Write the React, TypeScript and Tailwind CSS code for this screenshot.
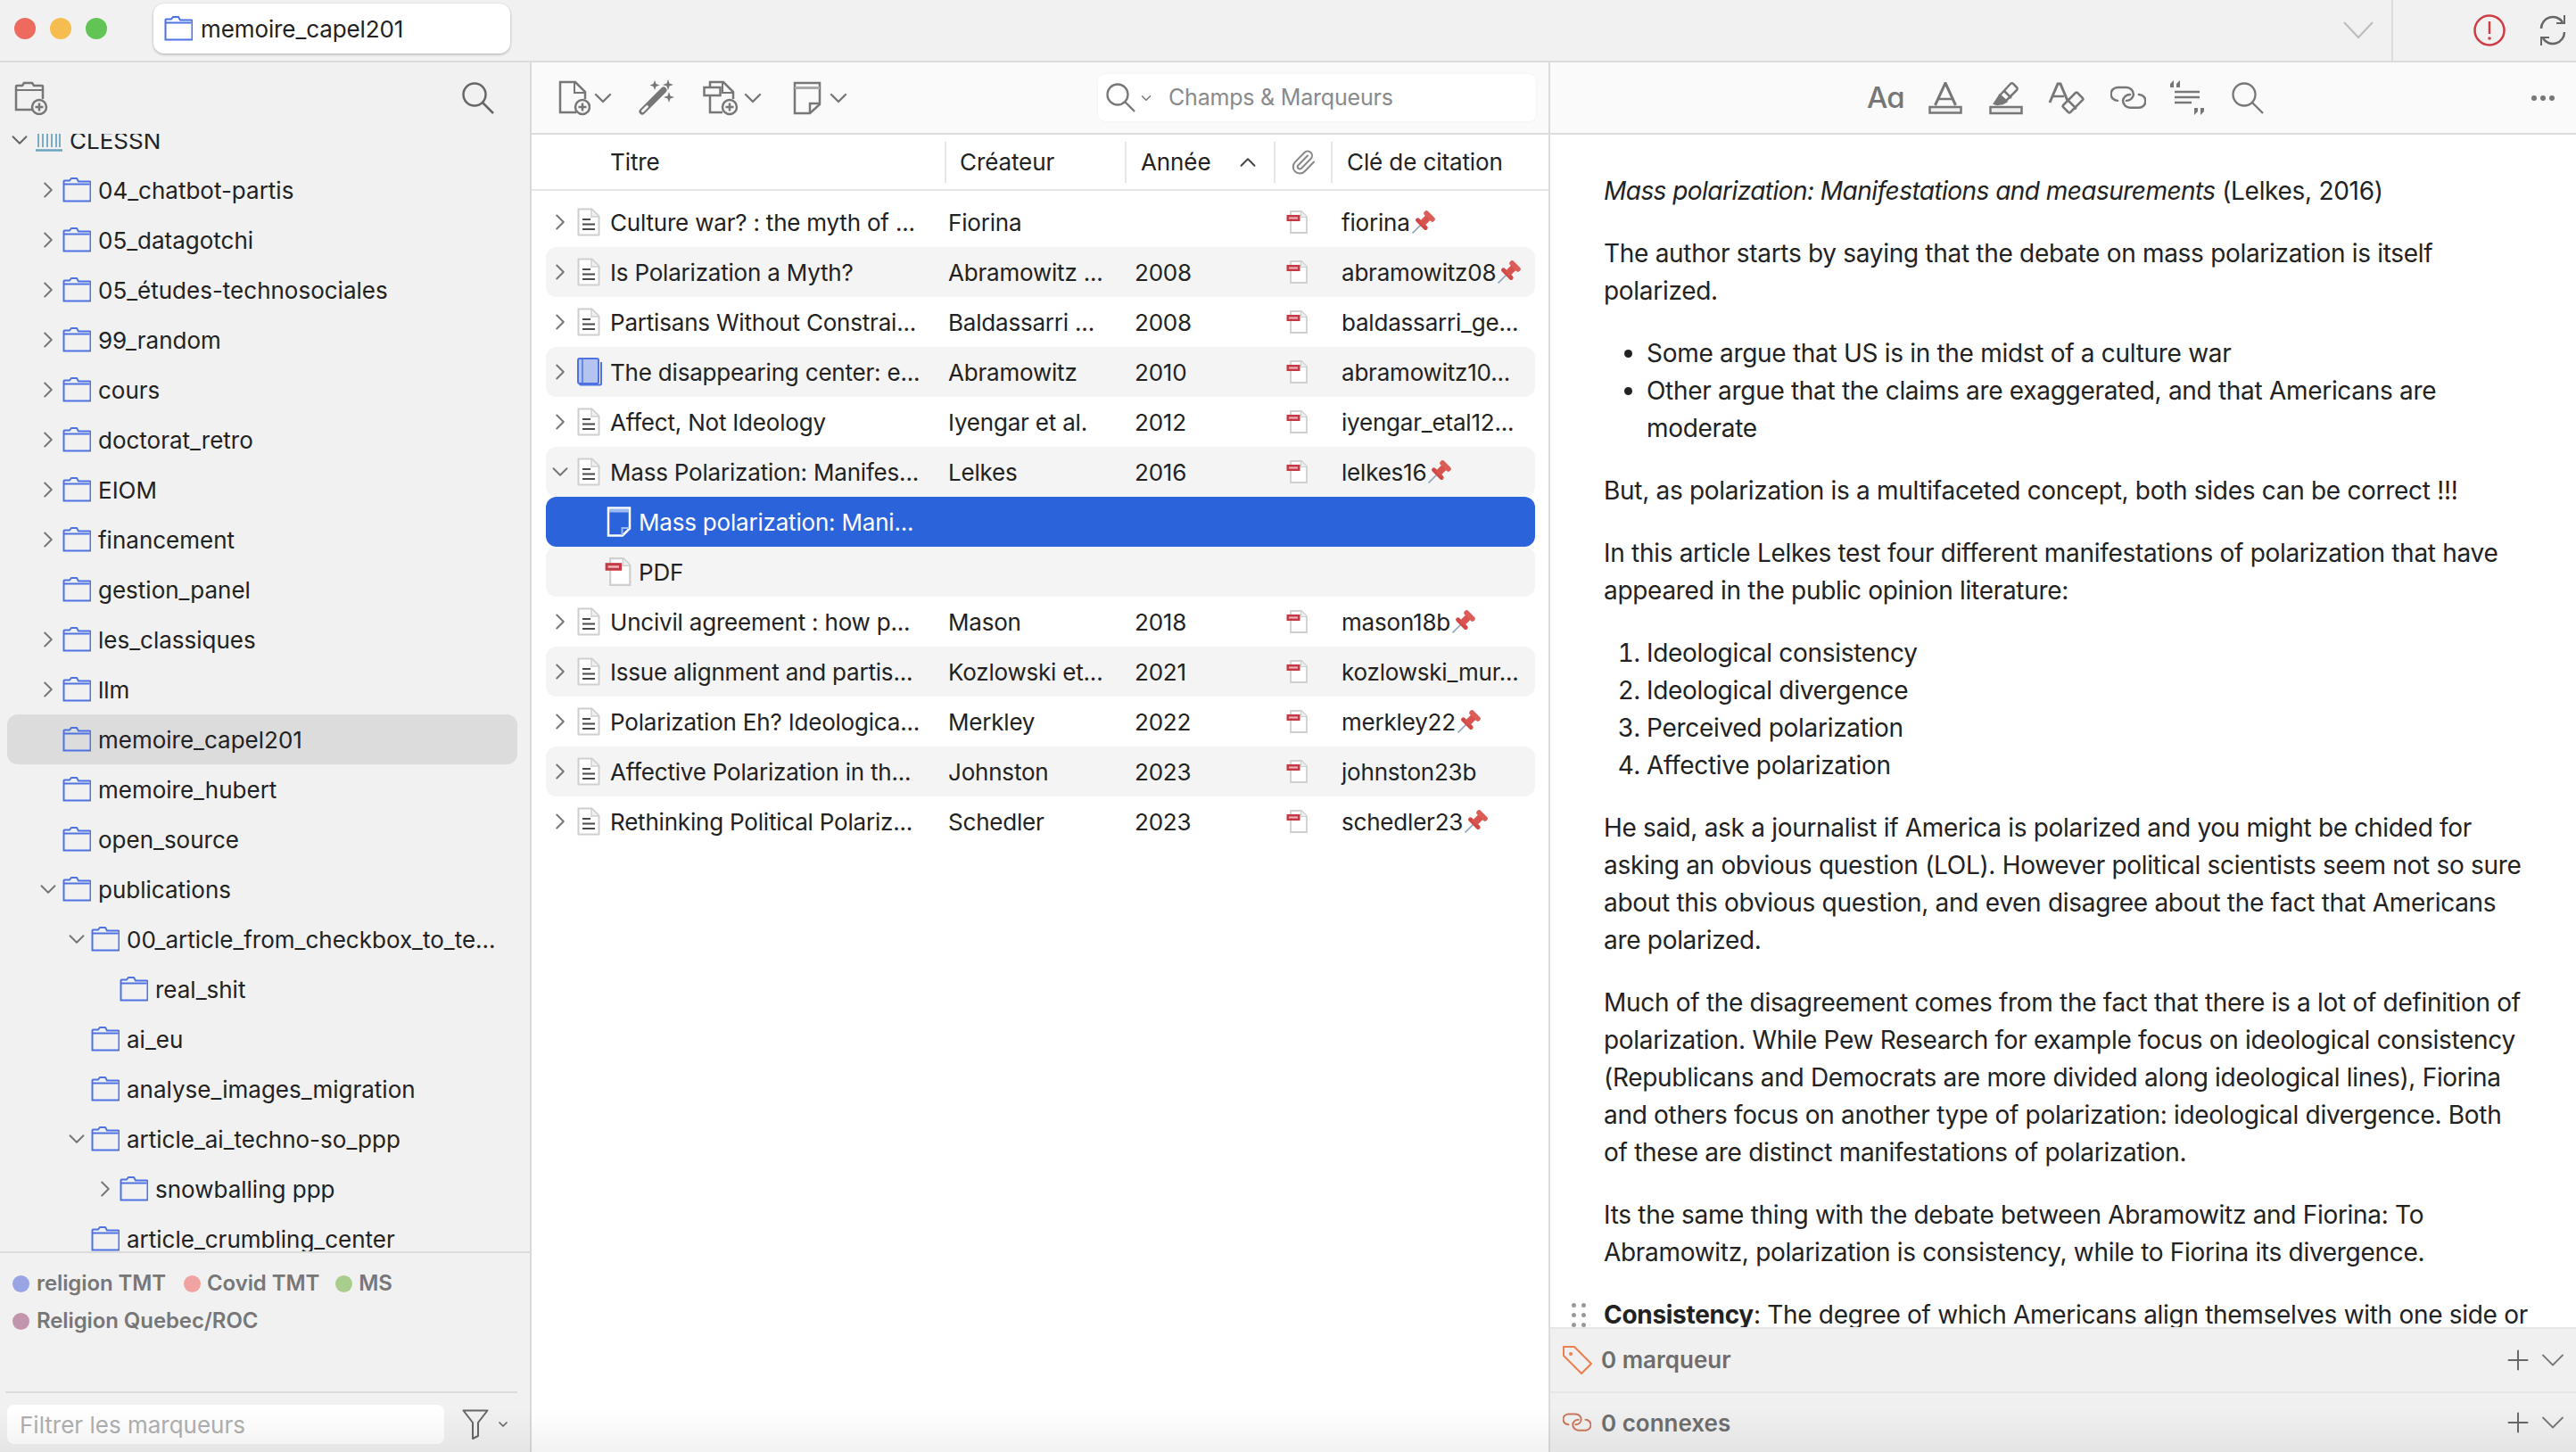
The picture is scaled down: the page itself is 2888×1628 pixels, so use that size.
import React from "react";
import { ChevronRight, ChevronDown, ChevronUp, Plus, Paperclip } from "lucide-react";

const FONT = "font-['Inter','Noto_Sans',sans-serif]";

type TreeItem = { name: string; level: number; arrow?: "right" | "down"; active?: boolean };

const tree: TreeItem[] = [
  { name: "04_chatbot-partis", level: 1, arrow: "right" },
  { name: "05_datagotchi", level: 1, arrow: "right" },
  { name: "05_études-technosociales", level: 1, arrow: "right" },
  { name: "99_random", level: 1, arrow: "right" },
  { name: "cours", level: 1, arrow: "right" },
  { name: "doctorat_retro", level: 1, arrow: "right" },
  { name: "EIOM", level: 1, arrow: "right" },
  { name: "financement", level: 1, arrow: "right" },
  { name: "gestion_panel", level: 1 },
  { name: "les_classiques", level: 1, arrow: "right" },
  { name: "llm", level: 1, arrow: "right" },
  { name: "memoire_capel201", level: 1, active: true },
  { name: "memoire_hubert", level: 1 },
  { name: "open_source", level: 1 },
  { name: "publications", level: 1, arrow: "down" },
  { name: "00_article_from_checkbox_to_te...", level: 2, arrow: "down" },
  { name: "real_shit", level: 3 },
  { name: "ai_eu", level: 2 },
  { name: "analyse_images_migration", level: 2 },
  { name: "article_ai_techno-so_ppp", level: 2, arrow: "down" },
  { name: "snowballing ppp", level: 3, arrow: "right" },
  { name: "article_crumbling_center", level: 2 },
];

type Row = {
  title: string;
  author?: string;
  year?: string;
  key?: string;
  pin?: boolean;
  kind?: "doc" | "book" | "note" | "pdf";
  open?: boolean;
  child?: boolean;
  shaded?: boolean;
  selected?: boolean;
};

const rows: Row[] = [
  { title: "Culture war? : the myth of ...", author: "Fiorina", key: "fiorina", pin: true },
  { title: "Is Polarization a Myth?", author: "Abramowitz ...", year: "2008", key: "abramowitz08", pin: true, shaded: true },
  { title: "Partisans Without Constrai...", author: "Baldassarri ...", year: "2008", key: "baldassarri_ge..." },
  { title: "The disappearing center: e...", author: "Abramowitz", year: "2010", key: "abramowitz10...", kind: "book", shaded: true },
  { title: "Affect, Not Ideology", author: "Iyengar et al.", year: "2012", key: "iyengar_etal12..." },
  { title: "Mass Polarization: Manifes...", author: "Lelkes", year: "2016", key: "lelkes16", pin: true, open: true, shaded: true },
  { title: "Mass polarization: Mani...", kind: "note", child: true, selected: true },
  { title: "PDF", kind: "pdf", child: true, shaded: true },
  { title: "Uncivil agreement : how p...", author: "Mason", year: "2018", key: "mason18b", pin: true },
  { title: "Issue alignment and partis...", author: "Kozlowski et...", year: "2021", key: "kozlowski_mur...", shaded: true },
  { title: "Polarization Eh? Ideologica...", author: "Merkley", year: "2022", key: "merkley22", pin: true },
  { title: "Affective Polarization in th...", author: "Johnston", year: "2023", key: "johnston23b", shaded: true },
  { title: "Rethinking Political Polariz...", author: "Schedler", year: "2023", key: "schedler23", pin: true },
];

const FolderIcon = () => (
  <svg width="32" height="28" viewBox="0 0 32 28" fill="none" stroke="#4f72e3" strokeWidth="2" className="shrink-0">
    <path d="M1.500 26.500V4.500a1 1 0 0 1 1-1h5.500l2-2.500h6l2 3.500h12.500a1 1 0 0 1 1 1v21z" />
    <path d="M1.500 7.500h29" />
  </svg>
);

const DocIcon = () => (
  <svg width="26" height="32" viewBox="0 0 26 32" className="shrink-0">
    <path d="M1.500 1.500h15l8 8v21h-23z" fill="#fff" stroke="#cfcfcf" strokeWidth="2" />
    <path d="M16 2v8h8" fill="#efefef" stroke="#cfcfcf" strokeWidth="1.500" />
    <path d="M6 13h9M6 18.500h14M6 24h14" stroke="#4a4a4a" strokeWidth="2" />
  </svg>
);

const BookIcon = () => (
  <svg width="28" height="32" viewBox="0 0 28 32" className="shrink-0">
    <path d="M3 4v25.500a1 1 0 0 0 1 1h22a1 1 0 0 0 1-1V5" fill="none" stroke="#4f72e3" strokeWidth="2" />
    <rect x="1" y="1" width="23" height="28" rx="2" fill="#b4c4ee" stroke="#4f72e3" strokeWidth="2" />
    <path d="M6 2v26" stroke="#4f72e3" strokeWidth="1.500" />
  </svg>
);

const PdfIcon = ({ big }: { big?: boolean }) => (
  <svg width={big ? 32 : 26} height={big ? 32 : 26} viewBox="0 0 26 26" className="shrink-0">
    <path d="M5 1h12l6 6v18H5z" fill="#fff" stroke="#cfcfcf" strokeWidth="1.800" />
    <path d="M16.500 1v6.500H23" fill="#efefef" stroke="#cfcfcf" strokeWidth="1.200" />
    <rect x="0.500" y="5" width="15" height="7" fill="#c53a45" />
    <rect x="3" y="7.500" width="10" height="2" fill="#efb9bd" />
  </svg>
);

const NoteWhiteIcon = () => (
  <svg width="28" height="34" viewBox="0 0 28 34" className="shrink-0">
    <path d="M2 1.500h24v23l-8 8H2z" fill="#2b63da" stroke="#fff" strokeWidth="2.500" />
    <rect x="3" y="3" width="22" height="3.500" fill="#9cb9f0" />
    <path d="M17.500 32v-8h8" fill="none" stroke="#9cb9f0" strokeWidth="2" />
  </svg>
);

const Pin = () => (
  <svg width="26" height="26" viewBox="0 0 24 24" className="ml-[2px] shrink-0">
    <path d="M0.500 23.500l9-9" stroke="#8fa3b8" strokeWidth="1.500" />
    <path d="M6 10l8 8" stroke="#cf4a46" strokeWidth="4.500" strokeLinecap="round" />
    <path d="M10 14l7-7" stroke="#d9534f" strokeWidth="7" />
    <path d="M15 3l6 6" stroke="#dc5c57" strokeWidth="5.500" strokeLinecap="round" />
  </svg>
);

const ToolDocPlus = () => (
  <svg width="36" height="40" viewBox="0 0 36 40" fill="none" stroke="#777" strokeWidth="2.500">
    <path d="M20 36H2V2h17l11 11v8" />
    <path d="M18 2v12h12" strokeWidth="2" />
    <circle cx="27" cy="30" r="8" fill="#fafafa" />
    <path d="M27 25.500v9M22.500 30h9" />
  </svg>
);

const ToolWand = () => (
  <svg width="42" height="42" viewBox="0 0 42 42" fill="none">
    <path d="M4 36L28 12" stroke="#777" strokeWidth="7" strokeLinecap="round" />
    <path d="M4.500 35.500l5-5" stroke="#fafafa" strokeWidth="3" strokeLinecap="round" />
    <path d="M18 1l1.500 4 4 1.500-4 1.500L18 12l-1.500-4-4-1.500 4-1.500zM33 0l1.500 4.500 4.500 1.500-4.500 1.500L33 12l-1.500-4.500L27 6l4.500-1.500zM34 14l1.500 4.500 4.500 1.500-4.500 1.500L34 26l-1.500-4.500L28 20l4.500-1.500z" fill="#777" />
  </svg>
);

const ToolAttach = () => (
  <svg width="42" height="40" viewBox="0 0 42 40" fill="none" stroke="#777" strokeWidth="2.500">
    <path d="M8 9V2h15l11 11v8M22 36H8V17" />
    <path d="M22 2v12h12" strokeWidth="2" />
    <rect x="1.500" y="8" width="18" height="9" fill="#fafafa" />
    <circle cx="30" cy="30" r="8" fill="#fafafa" />
    <path d="M30 25.500v9M25.500 30h9" />
  </svg>
);

const ToolNote = () => (
  <svg width="32" height="38" viewBox="0 0 32 38" fill="none" stroke="#777" strokeWidth="2.500">
    <path d="M2 2h28v24L19 36H2z" />
    <path d="M2 7.500h28" stroke="#aaa" strokeWidth="3" />
    <path d="M19 36V25h11" />
  </svg>
);

const ToolUnderlineA = () => (
  <svg width="38" height="36" viewBox="0 0 38 36">
    <path d="M7.500 26L19 1l11.500 25" fill="none" stroke="#777" strokeWidth="3" />
    <path d="M11 19h16" stroke="#777" strokeWidth="2.500" />
    <rect x="1.500" y="28" width="35" height="6.500" fill="#eee" stroke="#777" strokeWidth="2.500" />
  </svg>
);

const ToolHighlight = () => (
  <svg width="38" height="38" viewBox="0 0 38 38" fill="none" stroke="#777" strokeWidth="2.500">
    <path d="M12 16L24 3a2 2 0 0 1 3 0l4 4a2 2 0 0 1 0 3L19 22z" />
    <path d="M17 11l8 8" />
    <path d="M12 16l7 7-4 2-6 1-3-1z" fill="#777" />
    <rect x="1.500" y="29" width="35" height="7" fill="#eee" />
  </svg>
);

const ToolClear = () => (
  <svg width="42" height="36" viewBox="0 0 42 36" fill="none" stroke="#777">
    <path d="M2 23L11 2h3l8 19" strokeWidth="3" />
    <path d="M6 16h12" strokeWidth="2.500" />
    <path d="M17 26L31 12a1.500 1.500 0 0 1 2 0l6 6a1.500 1.500 0 0 1 0 2L25 34a1.500 1.500 0 0 1-2 0l-6-6a1.500 1.500 0 0 1 0-2zM23 21l9 9" strokeWidth="2.500" fill="#fafafa" />
  </svg>
);

const LinkIcon = ({ color = "#777", w = 40, sw = 2.5 }: { color?: string; w?: number; sw?: number }) => (
  <svg width={w} height={w * 0.72} viewBox="0 0 40 29" fill="none" stroke={color} strokeWidth={sw} strokeLinecap="round">
    <path d="M8 18a7.500 7.500 0 0 1 0-15h10a8 8 0 0 1 8 8 8 8 0 0 1-8 7" />
    <path d="M32 11a7.500 7.500 0 0 1 0 15H22a8 8 0 0 1-8-8 8 8 0 0 1 8-7" />
  </svg>
);

const ToolQuote = () => (
  <svg width="40" height="40" viewBox="0 0 40 40" fill="none">
    <path d="M5 0L1 4v4h4V3zM12 0L8 4v4h4V3z" fill="#777" />
    <path d="M6 13h28M6 19h28M6 25h19" stroke="#777" strokeWidth="2.500" />
    <path d="M28 31h4v4l-4 4v-3zM35 31h4v4l-4 4v-3z" fill="#777" />
  </svg>
);

const FilterIcon = () => (
  <svg width="30" height="34" viewBox="0 0 30 34" fill="none" stroke="#666" strokeWidth="2">
    <path d="M1.500 1.500h27L18 15v15l-6 3V15z" strokeLinejoin="round" />
  </svg>
);

const TagIcon = () => (
  <svg width="34" height="32" viewBox="0 0 34 32" fill="none" stroke="#ee7f4f" strokeWidth="2">
    <path d="M1 1h12l19 19-11 11L1 11z" strokeLinejoin="round" />
    <circle cx="9" cy="9" r="2" fill="#ee7f4f" stroke="none" />
  </svg>
);

const Lines = ({ lines }: { lines: React.ReactNode[] }) => (
  <>
    {lines.map((l, i) => (
      <div key={i} className="whitespace-nowrap">{l}</div>
    ))}
  </>
);

const NoteBody = () => (
  <div className="flex flex-col gap-7 pl-[60px] pt-[123px] text-[28px] leading-[42px] text-[#222] tracking-[-0.3px]">
    <div className="whitespace-nowrap">
      <em className="tracking-[-0.54px]">Mass polarization: Manifestations and measurements</em> (Lelkes, 2016)
    </div>
    <div>
      <Lines lines={["The author starts by saying that the debate on mass polarization is itself", "polarized."]} />
    </div>
    <ul className="list-disc pl-12">
      <li>Some argue that US is in the midst of a culture war</li>
      <li>
        <Lines lines={["Other argue that the claims are exaggerated, and that Americans are", "moderate"]} />
      </li>
    </ul>
    <div>But, as polarization is a multifaceted concept, both sides can be correct !!!</div>
    <div>
      <Lines lines={["In this article Lelkes test four different manifestations of polarization that have", "appeared in the public opinion literature:"]} />
    </div>
    <ol className="list-decimal pl-12">
      <li>Ideological consistency</li>
      <li>Ideological divergence</li>
      <li>Perceived polarization</li>
      <li>Affective polarization</li>
    </ol>
    <div>
      <Lines
        lines={[
          "He said, ask a journalist if America is polarized and you might be chided for",
          "asking an obvious question (LOL). However political scientists seem not so sure",
          "about this obvious question, and even disagree about the fact that Americans",
          "are polarized.",
        ]}
      />
    </div>
    <div>
      <Lines
        lines={[
          "Much of the disagreement comes from the fact that there is a lot of definition of",
          "polarization. While Pew Research for example focus on ideological consistency",
          "(Republicans and Democrats are more divided along ideological lines), Fiorina",
          "and others focus on another type of polarization: ideological divergence. Both",
          "of these are distinct manifestations of polarization.",
        ]}
      />
    </div>
    <div>
      <Lines
        lines={[
          "Its the same thing with the debate between Abramowitz and Fiorina: To",
          "Abramowitz, polarization is consistency, while to Fiorina its divergence.",
        ]}
      />
    </div>
    <div className="relative whitespace-nowrap">
      <div className="absolute left-[-36px] top-[8px] grid grid-cols-2 gap-x-[6px] gap-y-[6px]">
        {[0, 1, 2, 3, 4, 5, 6, 7].map((d) => (
          <span key={d} className="w-[5px] h-[5px] rounded-full bg-[#999]" />
        ))}
      </div>
      <strong>Consistency</strong>: The degree of which Americans align themselves with one side or
    </div>
  </div>
);

const TableRow = ({ row }: { row: Row }) => {
  const bg = row.selected ? "bg-[#2b63da] text-white" : row.shaded ? "bg-[#f4f4f4] text-[#222]" : "text-[#222]";
  return (
    <div className={`flex items-center h-14 rounded-xl text-[26px] tracking-[-0.2px] ${bg}`}>
      {row.child ? (
        <div className="w-[72px] shrink-0" />
      ) : (
        <div className="w-[72px] shrink-0 flex items-center">
          {row.open ? (
            <ChevronDown size={30} strokeWidth={1.6} className="ml-px text-[#777]" />
          ) : (
            <ChevronRight size={30} strokeWidth={1.6} className="ml-px text-[#777]" />
          )}
          <div className="ml-[4px]">{row.kind === "book" ? <BookIcon /> : <DocIcon />}</div>
        </div>
      )}
      {row.child ? (
        <div className="w-[451px] shrink-0 flex items-center">
          <div className="w-[44px] shrink-0 flex justify-center -mr-[12px] ml-[-12px]">
            {row.kind === "note" ? <NoteWhiteIcon /> : <PdfIcon big />}
          </div>
          <span className="ml-[12px] whitespace-nowrap">{row.title}</span>
        </div>
      ) : (
        <div className="w-[379px] shrink-0 whitespace-nowrap">{row.title}</div>
      )}
      {!row.child && (
        <>
          <div className="w-[209px] shrink-0 whitespace-nowrap">{row.author}</div>
          <div className="w-[171px] shrink-0">{row.year}</div>
          <div className="w-[61px] shrink-0 -translate-x-px">
            <PdfIcon />
          </div>
          <div className="flex items-center whitespace-nowrap">
            {row.key}
            {row.pin && <Pin />}
          </div>
        </>
      )}
    </div>
  );
};

const HeaderCell = ({ className, children }: { className: string; children?: React.ReactNode }) => (
  <div className={`flex items-center h-[46px] border-r-2 border-[#e6e6e6] whitespace-nowrap ${className}`}>{children}</div>
);

export default function App() {
  return (
    <div className={`${FONT} w-[2888px] h-[1628px] flex flex-col overflow-hidden bg-white relative`}>
      {/* title bar */}
      <div className="h-[70px] shrink-0 flex bg-[#f1f1f1] border-b-2 border-[#dcdcdc]">
        <div className="flex items-center gap-4 pl-4 h-[64px]">
          <span className="w-6 h-6 rounded-full bg-[#ee6a5f]" />
          <span className="w-6 h-6 rounded-full bg-[#f5bd4f]" />
          <span className="w-6 h-6 rounded-full bg-[#61c454]" />
        </div>
        <div className="ml-[52px] mt-1 w-[400px] h-14 bg-white rounded-xl shadow-[0_1px_3px_rgba(0,0,0,0.3)] flex items-center pl-3 gap-[9px] text-[26px] tracking-[-0.1px] text-[#222]">
          <FolderIcon />
          memoire_capel201
        </div>
        <div className="flex-1 flex justify-end items-center">
          <svg width="34" height="20" viewBox="0 0 34 20" fill="none" stroke="#bbb" strokeWidth="2" className="mr-[20px]">
            <path d="M1 1l16 17L33 1" />
          </svg>
        </div>
        <div className="w-[207px] h-full border-l-2 border-[#dcdcdc] flex items-center pl-[90px] gap-[36px]">
          <svg width="36" height="36" viewBox="0 0 36 36" fill="none">
            <circle cx="18" cy="18" r="16.500" stroke="#cf3c45" strokeWidth="2.500" />
            <path d="M18 8v14" stroke="#cf3c45" strokeWidth="2.500" />
            <circle cx="18" cy="27" r="1.800" fill="#cf3c45" />
          </svg>
          <svg width="34" height="36" viewBox="0 0 34 36" fill="none" stroke="#666" strokeWidth="2.500">
            <path d="M4 16A13 13 0 0 1 28 9" />
            <path d="M30 1v9h-9" strokeWidth="2" />
            <path d="M30 20A13 13 0 0 1 6 27" />
            <path d="M4 35v-9h9" strokeWidth="2" />
          </svg>
        </div>
      </div>

      <div className="flex-1 flex min-h-0">
        {/* sidebar */}
        <div className="w-[596px] shrink-0 flex flex-col bg-[#f1f1f1] border-r-2 border-[#d9d9d9]">
          <div className="h-20 shrink-0 flex items-center justify-between pl-4 pr-10">
            <svg width="38" height="38" viewBox="0 0 38 38" fill="none" stroke="#777" strokeWidth="2.500">
              <path d="M20 32H2V6a1 1 0 0 1 1-1h6l2-3h9l2 3h9a1 1 0 0 1 1 1v14" />
              <path d="M2 10h31" strokeWidth="2" />
              <circle cx="28" cy="29" r="8" fill="#f1f1f1" />
              <path d="M28 24.500v9M23.500 29h9" />
            </svg>
            <svg width="36" height="36" viewBox="0 0 36 36" fill="none" stroke="#666" strokeWidth="2.500">
              <circle cx="14" cy="14" r="12.500" />
              <path d="M23 23l12 12" />
            </svg>
          </div>

          <div className="flex-1 min-h-0 overflow-hidden">
            <div className="-mt-[21px] text-[26px] text-[#222]">
              <div className="flex items-center h-14 pl-[7px]">
                <ChevronDown size={30} strokeWidth={1.6} className="text-[#666]" />
                <svg width="30" height="28" viewBox="0 0 30 28" className="ml-[3px]" stroke="#6aa5bf" fill="none" strokeWidth="1.800">
                  <path d="M3 0v22M8 0v22M13 0v22M18 0v22M23 0v22M27 0v22" />
                  <path d="M0 25.500h30" strokeWidth="2.500" />
                </svg>
                <span className="ml-2">CLESSN</span>
              </div>
              {tree.map((item) => (
                <div
                  key={item.name}
                  className={`flex items-center h-14 ml-2 mr-[14px] rounded-xl ${item.active ? "bg-[#dcdcdc]" : ""}`}
                  style={{ paddingLeft: 30 + (item.level - 1) * 32 }}
                >
                  <div className="w-8 shrink-0 flex justify-center">
                    {item.arrow === "right" && <ChevronRight size={30} strokeWidth={1.6} className="text-[#777]" />}
                    {item.arrow === "down" && <ChevronDown size={30} strokeWidth={1.6} className="text-[#777]" />}
                  </div>
                  <FolderIcon />
                  <span className="ml-2 whitespace-nowrap">{item.name}</span>
                </div>
              ))}
            </div>
          </div>

          <div className="h-[225px] shrink-0 border-t-2 border-[#dcdcdc] flex flex-col">
            <div className="h-[155px] pl-[14px] pt-[13px] text-[24px] font-semibold tracking-[-0.1px] text-[#777]">
              <div className="flex items-center h-[42px]">
                <span className="w-[19px] h-[19px] rounded-full bg-[#98a4e4] mr-[8px]" />
                religion TMT
                <span className="w-[19px] h-[19px] rounded-full bg-[#f0a3a0] ml-[20px] mr-[7px]" />
                Covid TMT
                <span className="w-[19px] h-[19px] rounded-full bg-[#a8cd8c] ml-[18px] mr-[7px]" />
                MS
              </div>
              <div className="flex items-center h-[42px]">
                <span className="w-[19px] h-[19px] rounded-full bg-[#c295ad] mr-[8px]" />
                Religion Quebec/ROC
              </div>
            </div>
            <div className="mx-[6px] w-[574px] border-t-2 border-[#dcdcdc]" />
            <div className="flex items-center pl-2 pt-[13px]">
              <div className="w-[490px] h-11 rounded-lg bg-white flex items-center pl-[14px] text-[26px] text-[#b0b0b0]">
                Filtrer les marqueurs
              </div>
              <div className="ml-5"><FilterIcon /></div>
              <ChevronDown size={16} strokeWidth={2.5} className="ml-[8px] text-[#666]" />
            </div>
          </div>
        </div>

        {/* list */}
        <div className="w-[1142px] shrink-0 flex flex-col border-r-2 border-[#dcdcdc]">
          <div className="h-[81px] shrink-0 flex items-center bg-[#fafafa] border-b-2 border-[#dcdcdc] pl-[30px]">
            <ToolDocPlus />
            <ChevronDown size={32} strokeWidth={1.8} className="-ml-[2px] text-[#777]" />
            <div className="ml-[24px]"><ToolWand /></div>
            <div className="ml-[30px]"><ToolAttach /></div>
            <ChevronDown size={32} strokeWidth={1.8} className="-ml-[2px] text-[#777]" />
            <div className="ml-[29px]"><ToolNote /></div>
            <ChevronDown size={32} strokeWidth={1.8} className="ml-[3px] text-[#777]" />
            <div className="ml-[275px] w-[491px] h-[53px] rounded-lg bg-white shadow-[0_0_2px_rgba(0,0,0,0.08)] flex items-center pl-[9px] text-[25px] tracking-[-0.2px] text-[#8a8a8a]">
              <svg width="34" height="34" viewBox="0 0 34 34" fill="none" stroke="#777" strokeWidth="2.300">
                <circle cx="13" cy="13" r="11.500" />
                <path d="M21 21l11 11" />
              </svg>
              <ChevronDown size={18} strokeWidth={2} className="ml-[2px] text-[#777]" />
              <span className="ml-[16px]">Champs &amp; Marqueurs</span>
            </div>
          </div>

          <div className="h-[63px] shrink-0 flex items-center border-b-2 border-[#e6e6e6] text-[26px] tracking-[-0.1px] text-[#222]">
            <HeaderCell className="w-[465px] pl-[88px]">Titre</HeaderCell>
            <HeaderCell className="w-[202px] pl-[15px]">Créateur</HeaderCell>
            <HeaderCell className="w-[167px] pl-[16px] justify-between">
              Année
              <ChevronUp size={30} strokeWidth={1.5} className="mr-[14px] text-[#444]" />
            </HeaderCell>
            <HeaderCell className="w-[64px] justify-center">
              <Paperclip size={30} strokeWidth={1.6} className="text-[#888]" />
            </HeaderCell>
            <div className="pl-[16px] whitespace-nowrap">Clé de citation</div>
          </div>

          <div className="pt-[7px] pl-[16px] pr-[15px]">
            {rows.map((r) => (
              <TableRow key={r.title} row={r} />
            ))}
          </div>
        </div>

        {/* note */}
        <div className="flex-1 min-w-0 flex flex-col relative overflow-hidden">
          <div className="h-[81px] shrink-0 flex items-center bg-[#fafafa] border-b-2 border-[#dcdcdc] pl-[355px] relative z-10">
            <span className="text-[33px] text-[#777] font-medium w-[40px] tracking-[-1px] [font-feature-settings:'cv11']">Aa</span>
            <div className="ml-[29px]"><ToolUnderlineA /></div>
            <div className="ml-[30px]"><ToolHighlight /></div>
            <div className="ml-[28px]"><ToolClear /></div>
            <div className="ml-[28px]"><LinkIcon /></div>
            <div className="ml-[26px]"><ToolQuote /></div>
            <svg width="36" height="36" viewBox="0 0 36 36" fill="none" stroke="#777" strokeWidth="2.300" className="ml-[30px]">
              <circle cx="14" cy="14" r="12.500" />
              <path d="M23 23l12 12" />
            </svg>
            <div className="ml-auto mr-[24px] flex gap-[4px]">
              <span className="w-[6px] h-[6px] rounded-full bg-[#777]" />
              <span className="w-[6px] h-[6px] rounded-full bg-[#777]" />
              <span className="w-[6px] h-[6px] rounded-full bg-[#777]" />
            </div>
          </div>

          <div className="flex-1 min-h-0 overflow-hidden -mt-[81px]">
            <NoteBody />
          </div>

          <div className="h-[140px] shrink-0 bg-[#f0f0f0] border-t-2 border-[#e6e6e6] flex flex-col text-[26px] font-semibold text-[#6e6e6e] relative">
            <div className="h-[72px] flex items-center pl-[14px] pr-[4px] border-b-2 border-[#e6e6e6]">
              <TagIcon />
              <span className="ml-[9px] -translate-y-px">0 marqueur</span>
              <Plus size={36} strokeWidth={1.3} className="ml-auto text-[#666]" />
              <ChevronDown size={44} strokeWidth={1} className="-ml-px text-[#777]" />
            </div>
            <div className="flex-1 flex items-center pl-[14px] pr-[4px]">
              <LinkIcon color="#c9775a" w={32} />
              <span className="ml-[11px]">0 connexes</span>
              <Plus size={36} strokeWidth={1.3} className="ml-auto text-[#666]" />
              <ChevronDown size={44} strokeWidth={1} className="-ml-px text-[#777]" />
            </div>
          </div>
        </div>
      </div>

      {/* the window shadow fading along the bottom edge */}
      <div className="absolute left-0 right-0 bottom-0 h-[50px] bg-gradient-to-b from-transparent to-black/5 pointer-events-none" />
    </div>
  );
}
